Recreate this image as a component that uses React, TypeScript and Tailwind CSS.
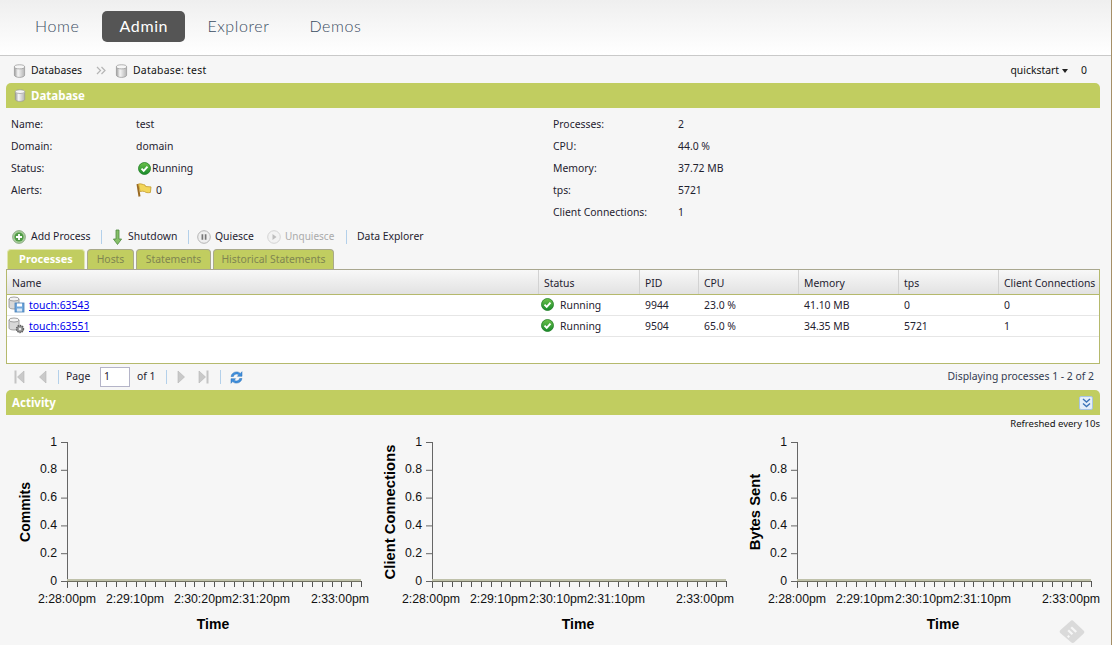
const font = "font-['Noto_Sans',sans-serif]";

function DbIcon({ size = 14 }: { size?: number }) {
  return (
    <svg width={size} height={size + 1} viewBox="0 0 14 15" className="shrink-0">
      <defs>
        <linearGradient id="db" x1="0" x2="1" y1="0" y2="0">
          <stop offset="0" stopColor="#9a9a9a" />
          <stop offset="0.35" stopColor="#f5f5f5" />
          <stop offset="1" stopColor="#b4b4b4" />
        </linearGradient>
      </defs>
      <path d="M1.5 3v9c0 1.3 2.5 2.4 5.5 2.4s5.5-1.1 5.5-2.4V3z" fill="url(#db)" stroke="#999" strokeWidth="0.8" />
      <ellipse cx="7" cy="3" rx="5.5" ry="2.2" fill="#f6f6f6" stroke="#999" strokeWidth="0.8" />
    </svg>
  );
}

function CheckIcon() {
  return (
    <svg width="13" height="13" viewBox="0 0 13 13" className="shrink-0">
      <defs>
        <linearGradient id="ok" x1="0" x2="0" y1="0" y2="1">
          <stop offset="0" stopColor="#6cc04a" />
          <stop offset="1" stopColor="#178a2c" />
        </linearGradient>
      </defs>
      <circle cx="6.5" cy="6.5" r="6" fill="url(#ok)" stroke="#1f7d24" strokeWidth="0.8" />
      <path d="M3.5 6.6l2.2 2.2 3.8-4.2" fill="none" stroke="#fff" strokeWidth="1.9" />
    </svg>
  );
}

function FlagIcon() {
  return (
    <svg width="16" height="14" viewBox="0 0 16 14" className="shrink-0">
      <path d="M1.5 1l2 12.5" stroke="#9a6a22" strokeWidth="2" />
      <path d="M2.5 1c3-.6 4 .6 6.5 1l.6 1.5 5.4.4-.6 5.6c-3 .5-4.5.1-6-1-1.2-.4-2.8-.4-4.3 0z" fill="#f2d65a" stroke="#c39a2c" strokeWidth="0.8" />
    </svg>
  );
}

function AddIcon() {
  return (
    <svg width="14" height="14" viewBox="0 0 14 14" className="shrink-0">
      <circle cx="7" cy="7" r="6.4" fill="#a9cf9c" stroke="#7f9f78" strokeWidth="0.8" />
      <circle cx="7" cy="7" r="4.6" fill="#4f9b45" />
      <path d="M7 4v6M4 7h6" stroke="#fff" strokeWidth="1.8" />
    </svg>
  );
}

function DownArrowIcon() {
  return (
    <svg width="11" height="16" viewBox="0 0 11 16" className="shrink-0">
      <path d="M4 1h3v9h2.6L5.5 15.5 1.4 10H4z" fill="#86bf68" stroke="#4f8a3f" strokeWidth="0.8" />
    </svg>
  );
}

function PauseIcon() {
  return (
    <svg width="14" height="14" viewBox="0 0 14 14" className="shrink-0">
      <circle cx="7" cy="7" r="6.3" fill="#efefef" stroke="#b5b5b5" />
      <path d="M5.4 4.2v5.6M8.6 4.2v5.6" stroke="#777" strokeWidth="1.7" />
    </svg>
  );
}

function PlayIcon() {
  return (
    <svg width="14" height="14" viewBox="0 0 14 14" className="shrink-0">
      <circle cx="7" cy="7" r="6.3" fill="#f2f2f2" stroke="#d4d4d4" />
      <path d="M5.5 4l4 3-4 3z" fill="#bdbdbd" />
    </svg>
  );
}

function SaveDbIcon() {
  return (
    <svg width="17" height="17" viewBox="0 0 17 17" className="shrink-0">
      <path d="M1 3v8c0 1.2 2 2 5 2s5-.8 5-2V3z" fill="#d8d8d8" stroke="#8c8c8c" strokeWidth="0.8" />
      <ellipse cx="6" cy="3" rx="5" ry="2" fill="#f4f4f4" stroke="#8c8c8c" strokeWidth="0.8" />
      <rect x="7" y="7" width="9" height="9" fill="#6fa6dc" stroke="#4a7fb5" strokeWidth="0.8" />
      <rect x="9" y="7.5" width="5" height="3" fill="#fff" />
      <rect x="9" y="12.5" width="5" height="3" fill="#dbe9f6" />
    </svg>
  );
}

function GearDbIcon() {
  return (
    <svg width="17" height="17" viewBox="0 0 17 17" className="shrink-0">
      <path d="M1 3v8c0 1.2 2 2 5 2s5-.8 5-2V3z" fill="#d8d8d8" stroke="#8c8c8c" strokeWidth="0.8" />
      <ellipse cx="6" cy="3" rx="5" ry="2" fill="#f4f4f4" stroke="#8c8c8c" strokeWidth="0.8" />
      <circle cx="12" cy="12" r="3.4" fill="#9a9a9a" stroke="#5f5f5f" strokeWidth="1.6" strokeDasharray="1.4 0.8" />
      <circle cx="12" cy="12" r="1.2" fill="#eee" />
    </svg>
  );
}

function PagerIcon({ type }: { type: "first" | "prev" | "next" | "last" }) {
  const left = type === "first" || type === "prev";
  const bar = type === "first" || type === "last";
  return (
    <svg width="11" height="14" viewBox="0 0 11 14" className="shrink-0">
      {left ? <path d="M10 1v12L3.5 7z" fill="#c9c9c9" stroke="#b5b5b5" strokeWidth="0.6" /> : <path d="M1 1v12l6.5-6z" fill="#c9c9c9" stroke="#b5b5b5" strokeWidth="0.6" />}
      {bar && (left ? <rect x="0.5" y="0.5" width="2" height="13" fill="#c4c4c4" /> : <rect x="8.5" y="0.5" width="2" height="13" fill="#c4c4c4" />)}
    </svg>
  );
}

function RefreshIcon() {
  return (
    <svg width="15" height="15" viewBox="0 0 15 14" className="shrink-0">
      <path d="M2 6c.6-3 3-4.6 5.6-4.6 1.6 0 2.8.6 3.7 1.5L13 1.2v4.6H8.4l1.5-1.5C9.3 3.8 8.6 3.5 7.7 3.5 6 3.5 4.8 4.5 4.4 6z" fill="#3f8fdc" stroke="#2a6fb5" strokeWidth="0.5" />
      <path d="M13 8c-.6 3-3 4.6-5.6 4.6-1.6 0-2.8-.6-3.7-1.5L2 12.8V8.2h4.6l-1.5 1.5c.6.5 1.3.8 2.2.8 1.7 0 2.9-1 3.3-2.5z" fill="#3f8fdc" stroke="#2a6fb5" strokeWidth="0.5" />
    </svg>
  );
}

function Sep() {
  return <div className="h-[14px] w-px bg-[#b3d0ea]" />;
}

function SectionBar({ title, icon, right }: { title: string; icon?: boolean; right?: boolean }) {
  return (
    <div className={`flex h-[25px] items-center gap-[5px] rounded-t-[5px] bg-[#c1cd60] ${icon ? "pl-[8px]" : "pl-[6px]"} pr-[7px] text-[11.5px] font-bold text-white`}>
      {icon && <DbIcon size={12} />}
      <span className="pt-[1px]">{title}</span>
      {right && (
        <div className="ml-auto flex h-[14px] w-[14px] items-center justify-center rounded-[2px] border border-[#a8c4e4] bg-[#e4eef9]">
          <svg width="9" height="10" viewBox="0 0 9 10">
            <path d="M1 1l3.5 3L8 1M1 5.5l3.5 3 3.5-3" fill="none" stroke="#3c74b8" strokeWidth="1.4" />
          </svg>
        </div>
      )}
    </div>
  );
}

function InfoRow({ label, children }: { label: string; children: React.ReactNode }) {
  return (
    <div className="flex h-[22px] items-center">
      <div className="w-[125px] pt-[1px]">{label}</div>
      <div className="flex items-center pt-[1px]">{children}</div>
    </div>
  );
}

const columns = [
  { name: "Name", w: "w-[532px]" },
  { name: "Status", w: "w-[101px]" },
  { name: "PID", w: "w-[59px]" },
  { name: "CPU", w: "w-[100px]" },
  { name: "Memory", w: "w-[100px]" },
  { name: "tps", w: "w-[100px]" },
  { name: "Client Connections", w: "w-[100px]" },
];

const tabs = [
  { name: "Processes", w: "w-[78px]" },
  { name: "Hosts", w: "w-[47px]" },
  { name: "Statements", w: "w-[75px]" },
  { name: "Historical Statements", w: "w-[121px]" },
];

const rows = [
  { name: "touch:63543", icon: <SaveDbIcon />, pid: "9944", cpu: "23.0 %", mem: "41.10 MB", tps: "0", conn: "0" },
  { name: "touch:63551", icon: <GearDbIcon />, pid: "9504", cpu: "65.0 %", mem: "34.35 MB", tps: "5721", conn: "1" },
];

function Chart({ label, labelSize, ticks }: { label: string; labelSize: number; ticks: [number, string][] }) {
  const axisX = 67;
  const top = 12;
  const bottom = 151;
  const yTicks = ["1", "0.8", "0.6", "0.4", "0.2", "0"];
  return (
    <svg width="365" height="215" viewBox="0 0 365 215" className="shrink-0 overflow-visible" fontFamily="'Liberation Sans', sans-serif">
      <text transform="translate(30 82) rotate(-90)" textAnchor="middle" fontSize={labelSize} fontWeight="700" fill="#000">
        {label}
      </text>
      {yTicks.map((t, i) => {
        const y = top + i * ((bottom - top) / 5);
        return (
          <g key={t}>
            <line x1={axisX - 6} x2={axisX} y1={y + 0.5} y2={y + 0.5} stroke="#666" />
            <text x={axisX - 10} y={y + 3.5} textAnchor="end" fontSize="12.3" fill="#111">
              {t}
            </text>
          </g>
        );
      })}
      <line x1={axisX + 0.5} x2={axisX + 0.5} y1={top} y2={bottom + 7} stroke="#666" />
      {Array.from({ length: 31 }, (_, i) => (
        <line key={i} x1={Math.round(axisX + i * 9.8) + 0.5} x2={Math.round(axisX + i * 9.8) + 0.5} y1={bottom} y2={bottom + 6} stroke="#555" />
      ))}
      <rect x={axisX} y={bottom - 2} width="294" height="3" fill="#bfc1aa" />
      <line x1={axisX} x2={axisX + 294} y1={bottom + 0.5} y2={bottom + 0.5} stroke="#6f6f60" />
      {ticks.map(([x, t]) => (
        <text key={t} x={x} y={bottom + 22} textAnchor="middle" fontSize="12.3" fill="#111">
          {t}
        </text>
      ))}
      <text x="213" y={bottom + 48} textAnchor="middle" fontSize="14" fontWeight="700" fill="#000">
        Time
      </text>
    </svg>
  );
}

export default function App() {
  return (
    <div className={`${font} relative flex h-[645px] w-[1112px] overflow-hidden bg-[#f6f6f6] text-[10.4px] text-[#1f2230]`}>
      <div className="min-w-0 flex-1">
        {/* Top nav */}
        <div className="flex h-[56px] items-center border-b border-[#c9c9c9] bg-gradient-to-b from-[#efefef] to-white pb-[3px] pl-[16px] font-['Lato',sans-serif] text-[16px] font-light tracking-[0.6px] text-[#3a4c62]">
          <div className="px-[19px]">Home</div>
          <div className="ml-[4px] flex h-[31px] w-[83px] items-center justify-center rounded-[5px] bg-[#555] font-normal text-white">Admin</div>
          <div className="pl-[22px] pr-[40px]">Explorer</div>
          <div>Demos</div>
        </div>

        {/* Breadcrumb */}
        <div className="flex h-[27px] items-center pl-[13px] pr-[24px] pt-[2px] text-[#111]">
          <DbIcon size={13} />
          <span className="ml-[5px] w-[52px]">Databases</span>
          <svg width="10" height="9" viewBox="0 0 10 9" className="ml-[13px] shrink-0">
            <path d="M1 1l3.5 3.5L1 8M5.5 1L9 4.5 5.5 8" fill="none" stroke="#b5b5b5" strokeWidth="1.2" />
          </svg>
          <span className="ml-[9px]"><DbIcon size={13} /></span>
          <span className="ml-[5px] tracking-[0.25px]">Database: test</span>
          <span className="ml-auto">quickstart</span>
          <svg width="6" height="4" viewBox="0 0 6 4" className="ml-[3px] shrink-0">
            <path d="M0 0h6L3 4z" fill="#222" />
          </svg>
          <span className="ml-[13px]">0</span>
        </div>

        <div className="pl-[6px] pr-[11px]">
          <SectionBar title="Database" icon />

          {/* Summary */}
          <div className="grid grid-cols-[542px_1fr] pl-[5px] pt-[5px]">
            <div>
              <InfoRow label="Name:">test</InfoRow>
              <InfoRow label="Domain:">domain</InfoRow>
              <InfoRow label="Status:">
                <span className="ml-[2px] mr-[1px]"><CheckIcon /></span>Running
              </InfoRow>
              <InfoRow label="Alerts:">
                <FlagIcon /><span className="ml-[4px]">0</span>
              </InfoRow>
            </div>
            <div>
              <InfoRow label="Processes:">2</InfoRow>
              <InfoRow label="CPU:">44.0 %</InfoRow>
              <InfoRow label="Memory:">37.72 MB</InfoRow>
              <InfoRow label="tps:">5721</InfoRow>
              <InfoRow label="Client Connections:">1</InfoRow>
            </div>
          </div>

          {/* Toolbar */}
          <div className="mt-[2px] flex h-[22px] items-center pl-[6px] pt-[1px]">
            <AddIcon />
            <span className="ml-[5px] w-[59px] whitespace-nowrap">Add Process</span>
            <div className="ml-[11px]"><Sep /></div>
            <span className="ml-[10px]"><DownArrowIcon /></span>
            <span className="ml-[5px] w-[48px]">Shutdown</span>
            <div className="ml-[12px]"><Sep /></div>
            <span className="ml-[8px]"><PauseIcon /></span>
            <span className="ml-[4px] w-[39px]">Quiesce</span>
            <div className="ml-[13px]"><PlayIcon /></div>
            <span className="ml-[4px] w-[49px] text-[10px] text-[#aaa]">Unquiesce</span>
            <div className="ml-[12px]"><Sep /></div>
            <span className="ml-[10px]">Data Explorer</span>
          </div>

          {/* Tabs */}
          <div className="mt-[2px] flex h-[20px] items-stretch gap-[2px] pl-[1px]">
            {tabs.map((tab, i) => (
              <div
                key={tab.name}
                className={
                  i === 0
                    ? `${tab.w} flex items-center justify-center rounded-t-[4px] border-x border-t border-[#dfe5ad] bg-[#c1cd60] text-[11px] font-bold text-white`
                    : `${tab.w} flex items-center justify-center whitespace-nowrap rounded-t-[4px] border-x border-t border-[#a9a98a] bg-[#c1cd60] text-[#7f8550]`
                }
              >
                {tab.name}
              </div>
            ))}
          </div>

          {/* Grid */}
          <div className="h-[95px] border border-t-[#a9a78f] border-x-[#b5b96c] border-b-[#b5b96c] bg-white">
            <div className="flex h-[25px] border-b border-[#b5b96c] bg-gradient-to-b from-[#f8f8f8] to-[#e2e2e2]">
              {columns.map((c) => (
                <div key={c.name} className={`${c.w} flex shrink-0 items-center whitespace-nowrap border-r border-[#d2d2d2] pl-[5px] pt-[3px] last:border-r-0`}>
                  {c.name}
                </div>
              ))}
            </div>
            {rows.map((r) => (
              <div key={r.name} className="flex h-[21px] items-center border-b border-[#e6e6e6]">
                <div className="flex w-[532px] shrink-0 items-center pl-[1px]">
                  {r.icon}
                  <a href="#" className="ml-[4px] pt-[2px] text-[#0000ee] underline">{r.name}</a>
                </div>
                <div className="flex w-[101px] shrink-0 items-center pl-[2px]">
                  <CheckIcon /><span className="ml-[6px] pt-[2px]">Running</span>
                </div>
                <div className="w-[59px] shrink-0 pl-[5px] pt-[2px]">{r.pid}</div>
                <div className="w-[100px] shrink-0 pl-[5px] pt-[2px]">{r.cpu}</div>
                <div className="w-[100px] shrink-0 pl-[5px] pt-[2px]">{r.mem}</div>
                <div className="w-[100px] shrink-0 pl-[5px] pt-[2px]">{r.tps}</div>
                <div className="w-[100px] shrink-0 pl-[5px] pt-[2px]">{r.conn}</div>
              </div>
            ))}
          </div>

          {/* Pager */}
          <div className="flex h-[26px] items-center pl-[8px] pr-[6px]">
            <PagerIcon type="first" />
            <span className="ml-[11px]"><PagerIcon type="prev" /></span>
            <div className="ml-[11px]"><Sep /></div>
            <span className="ml-[7px] w-[24px]">Page</span>
            <div className="ml-[10px] flex h-[20px] w-[30px] items-center border border-[#b4b4c8] bg-white pl-[3px]">1</div>
            <span className="ml-[7px] w-[21px]">of 1</span>
            <div className="ml-[8px]"><Sep /></div>
            <span className="ml-[10px]"><PagerIcon type="next" /></span>
            <span className="ml-[10px]"><PagerIcon type="last" /></span>
            <div className="ml-[11px]"><Sep /></div>
            <span className="ml-[8px]"><RefreshIcon /></span>
            <span className="ml-auto text-[#333b50]">Displaying processes 1 - 2 of 2</span>
          </div>

          <SectionBar title="Activity" right />
          <div className="mt-[3px] h-[12px] text-right text-[9.5px] leading-[12px] text-[#111]">Refreshed every 10s</div>
        </div>

        {/* Charts */}
        <div className="flex">
          <Chart label="Commits" labelSize={14} ticks={[[67, "2:28:00pm"], [135, "2:29:10pm"], [203, "2:30:20pm"], [261, "2:31:20pm"], [340, "2:33:00pm"]]} />
          <Chart label="Client Connections" labelSize={14.8} ticks={[[66, "2:28:00pm"], [134, "2:29:10pm"], [193, "2:30:10pm"], [251, "2:31:10pm"], [340, "2:33:00pm"]]} />
          <Chart label="Bytes Sent" labelSize={14.8} ticks={[[67, "2:28:00pm"], [135, "2:29:10pm"], [194, "2:30:10pm"], [252, "2:31:10pm"], [341, "2:33:00pm"]]} />
        </div>
      </div>
      <div className="w-px shrink-0 bg-[#a58f67]" />

      {/* Corner logo */}
      <svg width="26" height="24" viewBox="0 0 26 24" className="absolute left-[1059px] top-[620px]">
        <path d="M11.3 1.2a2.4 2.4 0 0 1 3.4 0l9.8 9.3a2.2 2.2 0 0 1 0 3.2l-9.1 8.6a2.4 2.4 0 0 1-3.3 0l-10.6-9a2.2 2.2 0 0 1 0-3.2z" fill="#dadada" />
        <path d="M13 6.5l5 4.7-1.6 1.5-5-4.7zM10 9.5l4.2 4-1.6 1.5-4.2-4zM9.5 15l1.5 1.5-1.5 1.4-1.5-1.5z" fill="#f6f6f6" />
      </svg>
    </div>
  );
}
